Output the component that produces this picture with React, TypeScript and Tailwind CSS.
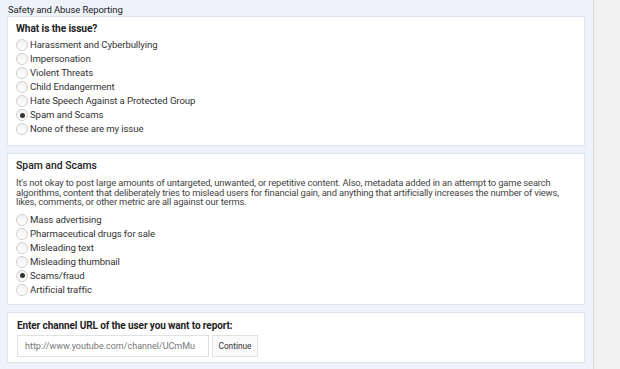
import React from 'react';

type Option = { label: string; checked?: boolean };

const issues: Option[] = [
  { label: 'Harassment and Cyberbullying' },
  { label: 'Impersonation' },
  { label: 'Violent Threats' },
  { label: 'Child Endangerment' },
  { label: 'Hate Speech Against a Protected Group' },
  { label: 'Spam and Scams', checked: true },
  { label: 'None of these are my issue' },
];

const spamTypes: Option[] = [
  { label: 'Mass advertising' },
  { label: 'Pharmaceutical drugs for sale' },
  { label: 'Misleading text' },
  { label: 'Misleading thumbnail' },
  { label: 'Scams/fraud', checked: true },
  { label: 'Artificial traffic' },
];

function Radio({ label, checked = false }: Option) {
  return (
    <label className="flex items-center h-[14px] gap-[2px]">
      <span className="w-[12px] h-[12px] rounded-full border border-[#cfcfcf] bg-gradient-to-b from-[#f2f2f2] to-white flex items-center justify-center shrink-0">
        {checked && <span className="w-[5px] h-[5px] rounded-full bg-[#333]" />}
      </span>
      <span className="text-[9.6px] text-[#333] leading-none tracking-[-0.1px]">{label}</span>
    </label>
  );
}

function Card({ children, className = '' }: { children: React.ReactNode; className?: string }) {
  return (
    <div className={`bg-white border border-[#dfe5ef] ${className}`}>{children}</div>
  );
}

export default function App() {
  return (
    <div className="w-[620px] h-[369px] flex overflow-hidden font-['Roboto','Liberation_Sans',sans-serif] bg-[#f1f1f1]">
      <div className="w-[594px] bg-[#eef2fa] border-r border-[#dcdcdc] pl-[7px] pr-[8px] flex flex-col">
        <div className="h-[16px] pl-[1px] pt-[4px] text-[9.5px] leading-[12px] text-[#222] tracking-[-0.1px]">
          Safety and Abuse Reporting
        </div>

        <Card className="pl-[8px] pt-[5px] pb-[8px] h-[130px]">
          <div className="text-[10.2px] font-bold text-[#222] leading-[14px] mb-[2px] tracking-[-0.1px]">What is the issue?</div>
          <div className="flex flex-col">
            {issues.map((o) => (
              <Radio key={o.label} {...o} />
            ))}
          </div>
        </Card>

        <Card className="mt-[7px] pl-[8px] pr-[10px] pt-[5px] h-[152px]">
          <div className="text-[10.4px] font-medium text-[#222] leading-[14px]">Spam and Scams</div>
          <p className="mt-[5px] w-[558px] text-[9.4px] leading-[9.6px] tracking-[-0.15px] text-[#444]">
            It's not okay to post large amounts of untargeted, unwanted, or repetitive content. Also, metadata added in an attempt to game search algorithms, content that deliberately tries to mislead users for financial gain, and anything that artificially increases the number of views, likes, comments, or other metric are all against our terms.
          </p>
          <div className="mt-[6px] flex flex-col">
            {spamTypes.map((o) => (
              <Radio key={o.label} {...o} />
            ))}
          </div>
        </Card>

        <Card className="mt-[7px] pl-[9px] pt-[6px] h-[51px]">
          <div className="text-[10px] font-bold text-[#222] leading-[14px] tracking-[-0.1px]">
            Enter channel URL of the user you want to report:
          </div>
          <div className="mt-[2px] flex gap-[3px]">
            <input
              readOnly
              value="http://www.youtube.com/channel/UCmMu"
              className="w-[192px] h-[22px] border border-[#e2e2e2] px-[7px] text-[9px] text-[#777] outline-none"
            />
            <button className="h-[22px] w-[46px] border border-[#e2e2e2] bg-[#fafafa] text-[8.3px] text-[#333]">
              Continue
            </button>
          </div>
        </Card>
      </div>
      <div className="flex-1" />
    </div>
  );
}
